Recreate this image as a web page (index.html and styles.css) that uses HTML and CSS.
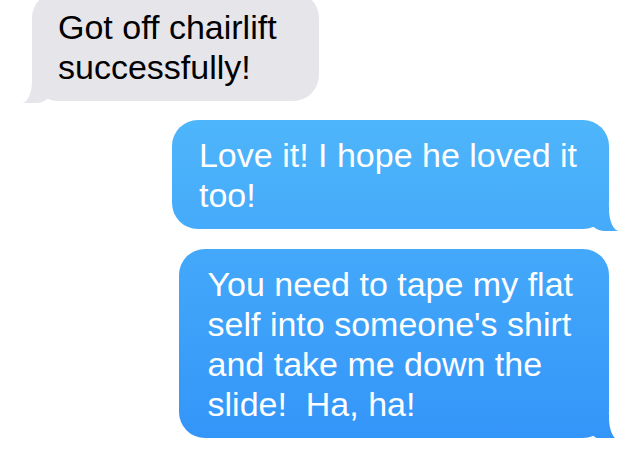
FILE: index.html
```html
<!DOCTYPE html>
<html lang="en">
  <head>
    <meta charset="UTF-8" />
    <meta name="viewport" content="width=device-width, initial-scale=1.0" />
    <title>Messages</title>
    <link rel="stylesheet" href="styles.css">
  </head>
  <body>
    <div class="thread">
      <div class="bubble received">Got off chairlift<br>successfully!</div>
      <div class="bubble sent">Love it! I hope he loved it<br>too!</div>
      <div class="bubble sent long">You need to tape my flat<br>self into someone's shirt<br>and take me down the<br>slide!&nbsp; Ha, ha!</div>
    </div>
  </body>
</html>
```

FILE: styles.css
```css
body {
  background: #ffffff;
  margin: 0;
  padding: 0;
  font-family: "Liberation Sans", Arial, sans-serif;
  overflow: hidden;
}
.thread {
  display: flex;
  flex-direction: column;
  gap: 19px;
  margin-top: -8px;
  padding: 0 31px 0 32px;
}
.bubble {
  position: relative;
  width: fit-content;
  font-size: 34px;
  line-height: 40px;
  white-space: nowrap;
  border-radius: 26px;
}
.bubble::before,
.bubble::after {
  content: "";
  position: absolute;
  bottom: -2px;
  height: 26px;
}
.received {
  align-self: flex-start;
  background: #e5e5ea;
  color: #000000;
  padding: 15px 42px 14px 26px;
}
.received::before {
  left: -10px;
  width: 30px;
  background: #e5e5ea;
  border-bottom-right-radius: 16px 14px;
}
.received::after {
  left: -30px;
  width: 30px;
  background: #ffffff;
  border-bottom-right-radius: 10px 22px;
}
.sent {
  align-self: flex-end;
  color: #ffffff;
  background: linear-gradient(to bottom, #58c2fc 0, #3394f8 449px) fixed;
  padding: 15px 32px 14px 27px;
}
.sent + .sent {
  margin-top: 1px;
}
.long {
  padding-left: 29px;
  padding-right: 36px;
}
.sent::before {
  right: -10px;
  width: 30px;
  background: linear-gradient(to bottom, #58c2fc 0, #3394f8 449px) fixed;
  border-bottom-left-radius: 16px 14px;
}
.sent::after {
  right: -30px;
  width: 30px;
  background: #ffffff;
  border-bottom-left-radius: 10px 22px;
}
```
